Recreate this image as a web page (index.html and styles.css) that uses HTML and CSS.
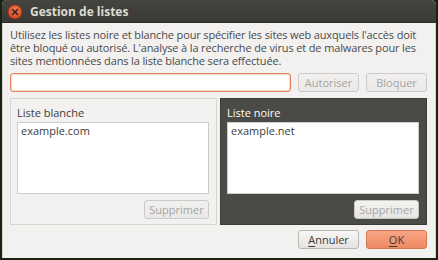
FILE: index.html
```html
<!DOCTYPE html>
<html lang="fr">
<head>
<meta charset="utf-8">
<title>Gestion de listes</title>
<link rel="stylesheet" href="styles.css">
</head>
<body>
<div class="window">
  <div class="titlebar">
    <svg class="close" width="16" height="16" viewBox="0 0 16 16">
      <defs>
        <radialGradient id="cg" cx="50%" cy="35%" r="60%">
          <stop offset="0" stop-color="#f57a52"/>
          <stop offset="1" stop-color="#d84a1f"/>
        </radialGradient>
      </defs>
      <circle cx="8" cy="8" r="7" fill="url(#cg)" stroke="#8e2f14" stroke-width="0.8"/>
      <path d="M5.6 5.6 L10.4 10.4 M10.4 5.6 L5.6 10.4" stroke="#3a2a22" stroke-width="1.5" stroke-linecap="round"/>
    </svg>
    <span class="title">Gestion de listes</span>
  </div>
  <div class="content">
    <p class="desc">Utilisez les listes noire et blanche pour spécifier les sites web auxquels l'accès doit<br>être bloqué ou autorisé. L'analyse à la recherche de virus et de malwares pour les<br>sites mentionnées dans la liste blanche sera effectuée.</p>
    <div class="entry-row">
      <div class="entry"></div>
      <button class="btn" disabled>Autoriser</button>
      <button class="btn" disabled>Bloquer</button>
    </div>
    <div class="lists">
      <div class="frame frame-white">
        <div class="frame-label">Liste blanche</div>
        <div class="listbox">example.com</div>
        <div class="frame-actions"><button class="btn" disabled>Supprimer</button></div>
      </div>
      <div class="frame frame-black">
        <div class="frame-label">Liste noire</div>
        <div class="listbox">example.net</div>
        <div class="frame-actions"><button class="btn" disabled>Supprimer</button></div>
      </div>
    </div>
    <div class="actions">
      <button class="btn btn-normal"><u>A</u>nnuler</button>
      <button class="btn btn-ok"><u>O</u>K</button>
    </div>
  </div>
</div>
</body>
</html>
```

FILE: styles.css
```css
html, body {
  margin: 0;
  padding: 0;
  background: #17230f;
  width: 438px;
  height: 260px;
  overflow: hidden;
}
body {
  font-family: "Open Sans", "Noto Sans", sans-serif;
  font-size: 11px;
  color: #3c3c3c;
}
.window {
  margin-left: 2px;
  width: 434px;
  height: 258px;
  display: flex;
  flex-direction: column;
  background: #f2f1f0;
  border-radius: 5px 5px 0 0;
  overflow: hidden;
}
.titlebar {
  height: 22px;
  flex: none;
  background: linear-gradient(#45443f, #3a3935);
  display: flex;
  align-items: center;
  padding-left: 5px;
  gap: 7px;
  border-bottom: 1px solid #2e2d2a;
}
.close { display: block; margin-top: 2px; }
.title {
  color: #dfdbd2;
  font-weight: bold;
  font-size: 12px;
  margin-top: 1px;
}
.content {
  flex: 1;
  padding: 5px 8px 0 7px;
  display: flex;
  flex-direction: column;
  border-left: 1px solid #d6d4d1;
  border-right: 1px solid #d6d4d1;
}
.desc {
  margin: 0;
  line-height: 13px;
  color: #4a4a4a;
  letter-spacing: -0.14px;
  white-space: nowrap;
}
.entry-row {
  display: flex;
  gap: 7px;
  margin-top: 6px;
  height: 19px;
}
.entry {
  flex: 1;
  background: #fff;
  border: 1px solid #e8825a;
  border-radius: 3px;
  box-shadow: 0 0 0 0.5px #f0b39b inset;
}
.btn {
  font-family: inherit;
  font-size: 11px;
  width: 61px;
  height: 19px;
  padding: 0;
  border: 1px solid #cdcbc9;
  border-radius: 3px;
  background: linear-gradient(#f2f1f0, #e9e8e6);
  color: #a6a5a3;
}
.lists {
  display: flex;
  gap: 3px;
  margin-top: 6px;
  height: 127px;
}
.frame {
  flex: 1;
  display: flex;
  flex-direction: column;
  padding: 6px 7px 0 6px;
}
.frame-white {
  border: 1px solid #d8d6d3;
  background: #f2f1f0;
}
.frame-black {
  background: #4a4a47;
  border: 1px solid #3b3b38;
}
.frame-label {
  line-height: 15px;
  height: 16px;
}
.frame-black .frame-label { color: #ffffff; }
.listbox {
  margin-top: 1px;
  height: 68px;
  background: #fff;
  border: 1px solid #cfcdca;
  padding: 1px 3px;
  line-height: 14px;
  color: #3c3c3c;
}
.frame-actions {
  display: flex;
  justify-content: flex-end;
  margin-top: 6px;
}
.frame-actions .btn { width: 65px; }
.frame-black .frame-actions .btn {
  background: linear-gradient(#f4f3f2, #e6e5e3);
  border-color: #c9c7c4;
}
.actions {
  display: flex;
  justify-content: flex-end;
  gap: 7px;
  margin-top: 5px;
}
.btn-normal {
  color: #3c3c3c;
  border-color: #b9b7b4;
  background: linear-gradient(#f8f7f6, #e4e3e1);
}
.btn-ok {
  color: #3c3c3c;
  border-color: #d2774f;
  background: linear-gradient(#f8a585, #ef8a63);
}
u { text-decoration-thickness: 1px; text-underline-offset: 2px; }
```
